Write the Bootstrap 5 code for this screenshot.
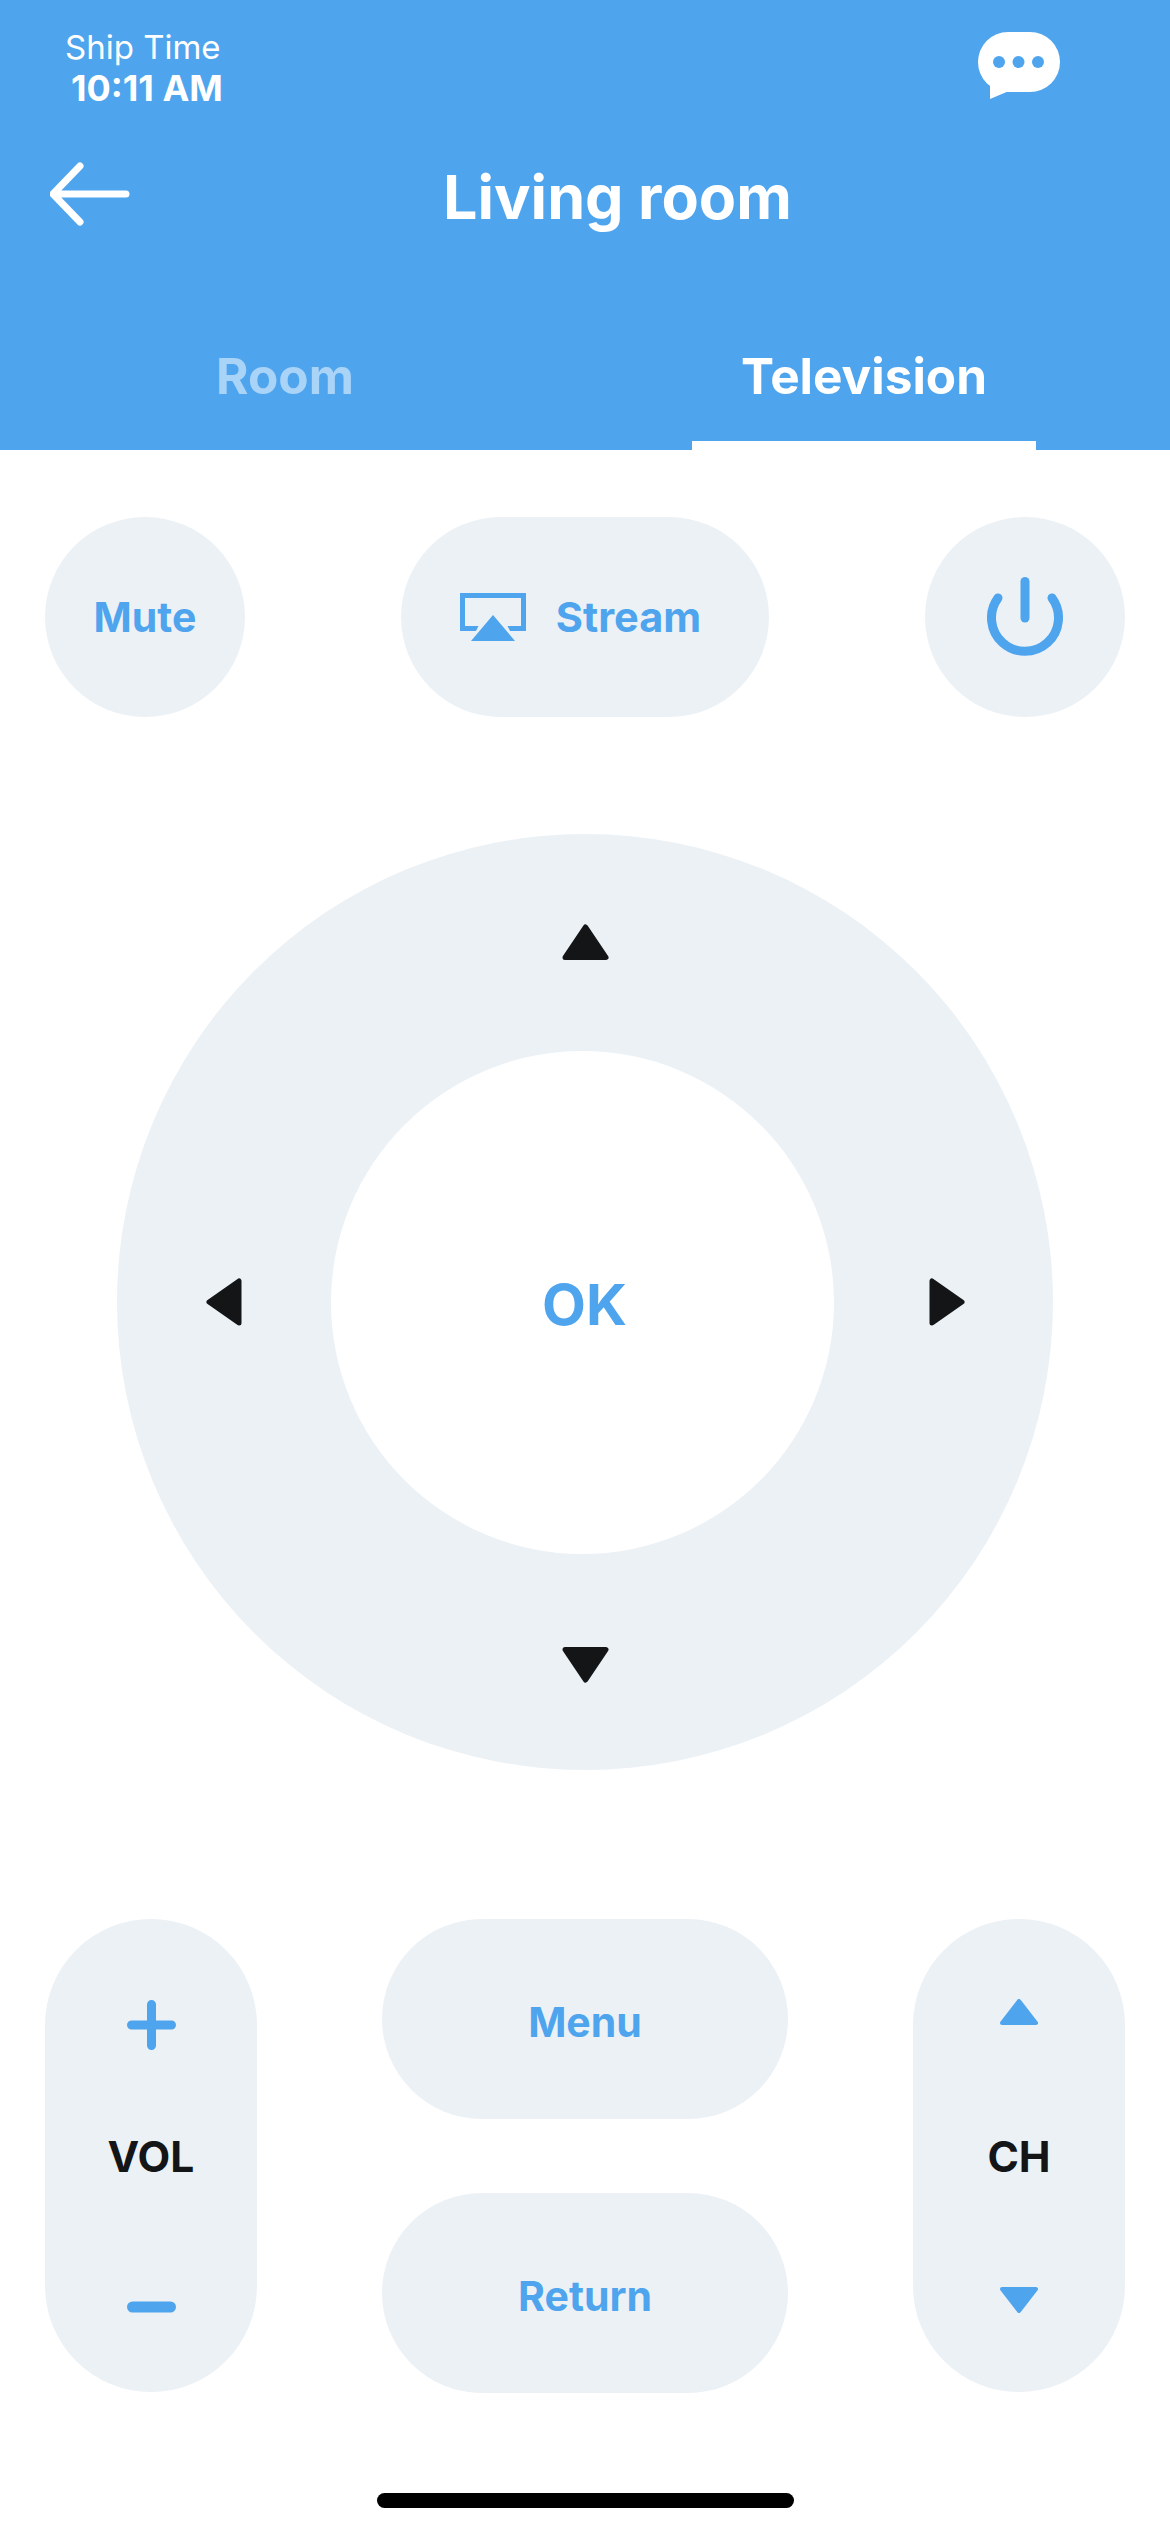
<!doctype html>
<html lang="en">
<head>
<meta charset="utf-8">
<title>Living room</title>
<link href="https://cdn.jsdelivr.net/npm/bootstrap@5.3.0/dist/css/bootstrap.min.css" rel="stylesheet">
<style>
:root{--blue:#4fa4ee;--pad:#ecf1f5;--ink:#141517}
body{width:1170px;height:2532px;overflow:hidden;background:#fff;font-family:"Inter","Liberation Sans",sans-serif;font-weight:700}
.hdr{height:450px;background:var(--blue);color:#fff}
.status-row{height:100px;padding:26px 110px 0 65px}
.chat-mark{margin-top:6px}
.ship-label{font-size:33px;font-weight:400;line-height:42px}
.ship-time{font-size:36px;font-weight:700;line-height:40px;margin-left:6px}
.title-row{padding:62px 0 0 50px}
.page-title{font-size:61px;line-height:70px;margin:0 0 0 313px;font-weight:700}
.tab-row{padding:0 0 0 113px;gap:235px;margin-top:auto}
.tab-item{width:344px;height:108px;font-size:49.500px;line-height:68px;text-align:center;border-bottom:9px solid transparent;color:#a9d3f7;padding:0}
.tab-item.is-on{color:#fff;border-bottom-color:#fff}
.key{--bs-btn-bg:var(--pad);--bs-btn-hover-bg:var(--pad);--bs-btn-active-bg:var(--pad);--bs-btn-color:var(--blue);--bs-btn-hover-color:var(--blue);--bs-btn-active-color:var(--blue);--bs-btn-border-width:0;--bs-btn-padding-x:0;--bs-btn-padding-y:0;--bs-btn-font-weight:700;font-size:41px;line-height:50px}
.top-row{padding:0 45px;margin-top:67px}
.key-round{width:200px;height:200px}
.key-stream{width:368px;height:200px;gap:30px;padding-right:9px;font-size:41.500px}
.dpad{width:936px;height:936px;margin-top:117px;background:var(--pad);display:grid;grid-template-columns:214px 503px 219px;grid-template-rows:1fr 503px 1fr;place-items:center}
.dpad-ok{width:503px;height:503px;background:#fff;font-size:57px;padding:5px 0 0 4px;--bs-btn-bg:#fff;--bs-btn-hover-bg:#fff;--bs-btn-active-bg:#fff}
.arrow-up{margin-left:6px}
.arrow-right{margin-left:6px}
.arrow-down{margin:6px 0 0 6px}
.bottom-row{padding:0 45px;margin-top:149px}
.key-tall{width:212px;height:473px;background:var(--pad)}
.key-wide{width:406px;height:200px;padding-top:5px}
.wide-col{gap:74px}
.tall-label{color:var(--ink);font-size:42.500px;line-height:42px}
.gap-a{margin-top:86px}.gap-b{margin-top:123px}.gap-c{margin-top:111px}.gap-d{margin-top:109px}
.pt-a{padding-top:81px}.pt-b{padding-top:80px}
.home-bar{width:417px;height:15px;background:#000;margin-top:100px}
svg{display:block}
</style>
</head>
<body>
<header class="hdr d-flex flex-column">
  <div class="status-row d-flex justify-content-between align-items-start">
    <div>
      <div class="ship-label">Ship Time</div>
      <div class="ship-time">10:11 AM</div>
    </div>
    <svg class="chat-mark" width="82" height="67" viewBox="0 0 82 67" aria-hidden="true">
      <rect width="82" height="60" rx="30" fill="#fff"/>
      <path fill="#fff" d="M12 45V67L31 59Z"/>
      <circle cx="21" cy="30" r="6" fill="#4fa4ee"/><circle cx="40.500" cy="30" r="6" fill="#4fa4ee"/><circle cx="60" cy="30" r="6" fill="#4fa4ee"/>
    </svg>
  </div>
  <div class="title-row d-flex align-items-start">
    <svg width="80" height="64" viewBox="0 0 80 64" fill="none" stroke="#fff" stroke-width="7" stroke-linecap="round" stroke-linejoin="round" aria-hidden="true">
      <path d="M76 32H4M30 4L3 32L30 60"/>
    </svg>
    <h1 class="page-title">Living room</h1>
  </div>
  <div class="tab-row d-flex">
    <div class="tab-item">Room</div>
    <div class="tab-item is-on">Television</div>
  </div>
</header>

<main>
  <div class="top-row d-flex justify-content-between">
    <button class="btn key key-round rounded-circle">Mute</button>
    <button class="btn key key-stream rounded-pill d-flex align-items-center justify-content-center">
      <svg width="66" height="48" viewBox="0 0 66 48" aria-hidden="true">
        <path fill="#4fa4ee" d="M0 0H66V38H50L47.500 33H61V5H5V33H18.500L16 38H0Z"/>
        <path fill="#4fa4ee" d="M33 22L55 48H11Z"/>
      </svg>
      <span>Stream</span>
    </button>
    <button class="btn key key-round rounded-circle d-flex align-items-center justify-content-center" aria-label="Power">
      <svg width="76" height="80" viewBox="0 0 76 80" fill="none" stroke="#4fa4ee" stroke-width="9" stroke-linecap="round" aria-hidden="true">
        <path d="M38 4.500V41"/>
        <path d="M11 21A33.500 33.500 0 1 0 65 21"/>
      </svg>
    </button>
  </div>

  <div class="dpad rounded-circle mx-auto">
    <svg class="arrow-up" style="grid-area:1/2" width="47" height="36" viewBox="0 0 47 36" aria-hidden="true"><path fill="#141517" stroke="#141517" stroke-width="5" stroke-linejoin="round" d="M23.500 3L44 33.500H3Z"/></svg>
    <svg style="grid-area:2/1" width="36" height="48" viewBox="0 0 36 48" aria-hidden="true"><path fill="#141517" stroke="#141517" stroke-width="5" stroke-linejoin="round" d="M3 24L33 3V45Z"/></svg>
    <button class="btn key dpad-ok rounded-circle" style="grid-area:2/2">OK</button>
    <svg class="arrow-right" style="grid-area:2/3" width="36" height="48" viewBox="0 0 36 48" aria-hidden="true"><path fill="#141517" stroke="#141517" stroke-width="5" stroke-linejoin="round" d="M33 24L3 3V45Z"/></svg>
    <svg class="arrow-down" style="grid-area:3/2" width="47" height="36" viewBox="0 0 47 36" aria-hidden="true"><path fill="#141517" stroke="#141517" stroke-width="5" stroke-linejoin="round" d="M23.500 33L44 2.500H3Z"/></svg>
  </div>

  <div class="bottom-row d-flex justify-content-between">
    <div class="key-tall rounded-pill d-flex flex-column align-items-center pt-a">
      <svg width="49" height="50" viewBox="0 0 49 50" fill="none" stroke="#4fa4ee" stroke-width="9" stroke-linecap="round" aria-hidden="true"><path d="M24.500 4.500V45.500M4.500 25H44.500"/></svg>
      <div class="tall-label gap-a">VOL</div>
      <svg class="gap-b" width="49" height="12" viewBox="0 0 49 12" fill="none" stroke="#4fa4ee" stroke-width="11" stroke-linecap="round" aria-hidden="true"><path d="M5.500 6H43.500"/></svg>
    </div>
    <div class="wide-col d-flex flex-column">
      <button class="btn key key-wide rounded-pill">Menu</button>
      <button class="btn key key-wide rounded-pill">Return</button>
    </div>
    <div class="key-tall rounded-pill d-flex flex-column align-items-center pt-b">
      <svg width="38" height="26" viewBox="0 0 38 26" aria-hidden="true"><path fill="#4fa4ee" stroke="#4fa4ee" stroke-width="4" stroke-linejoin="round" d="M19 2L36 24H2Z"/></svg>
      <div class="tall-label gap-c">CH</div>
      <svg class="gap-d" width="38" height="26" viewBox="0 0 38 26" aria-hidden="true"><path fill="#4fa4ee" stroke="#4fa4ee" stroke-width="4" stroke-linejoin="round" d="M19 24L36 2H2Z"/></svg>
    </div>
  </div>
  <div class="home-bar rounded-pill mx-auto"></div>
</main>
</body>
</html>
